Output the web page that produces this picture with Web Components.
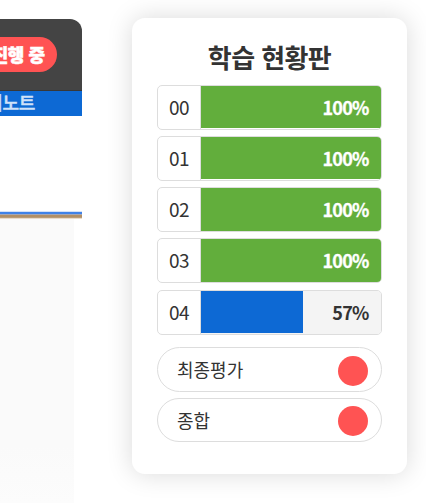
<!DOCTYPE html>
<html lang="ko">
<head>
<meta charset="utf-8">
<title>학습 현황판</title>
<style>
  body {
    margin: 0;
    width: 426px;
    height: 503px;
    overflow: hidden;
    display: flex;
    background: #fff;
    color: #333;
    font-family: "Noto Sans CJK KR", sans-serif;
  }
</style>
</head>
<body>
<lesson-panel status="진행 중" tab="의노트"></lesson-panel>
<status-board heading="학습 현황판">
  <progress-row label="00" value="100"></progress-row>
  <progress-row label="01" value="100"></progress-row>
  <progress-row label="02" value="100" class="tall"></progress-row>
  <progress-row label="03" value="100" class="tall"></progress-row>
  <progress-row label="04" value="57" class="current"></progress-row>
  <result-row slot="results">최종평가</result-row>
  <result-row slot="results" class="last">종합</result-row>
</status-board>

<script>
class LessonPanel extends HTMLElement {
  constructor() {
    super();
    this.attachShadow({ mode: 'open' });
    this.shadowRoot.innerHTML = `
      <style>
        :host {
          display: flex;
          flex-direction: column;
          flex: none;
          width: 82px;
          margin-top: 19px;
          overflow: hidden;
        }
        .header {
          display: flex;
          justify-content: flex-end;
          height: 72px;
          padding: 18px 25px 0 0;
          box-sizing: border-box;
          background: #444;
          border-bottom: 1px solid #383838;
          border-radius: 0 12px 0 0;
        }
        .status {
          flex: none;
          height: 35px;
          line-height: 34px;
          padding: 0 12.5px;
          border-radius: 18px;
          background: #ff5353;
          color: #fff;
          font-size: 18px;
          font-weight: 900;
          letter-spacing: -0.5px;
          -webkit-text-stroke: 0.5px #fff;
          white-space: nowrap;
        }
        .tab {
          display: flex;
          justify-content: flex-end;
          height: 25px;
          line-height: 23px;
          padding-right: 47px;
          background: #0d69d4;
          color: #cfe2f9;
          font-size: 18px;
          font-weight: 500;
          letter-spacing: -0.3px;
          -webkit-text-stroke: 0.5px #cfe2f9;
          white-space: nowrap;
        }
        .rule {
          height: 8px;
          margin-top: 95px;
          background: linear-gradient(#d5e2f7 0 1px, #3f82e8 1px 3px, #a5a7b5 3px 4px, #b18f66 4px 6px, #b99c78 6px 7px, #eadccb 7px);
        }
        .paper {
          width: 74px;
          flex: 1;
          background: linear-gradient(#fafafa 80%, #fcfcfc);
        }
      </style>
      <div class="header"><span class="status"></span></div>
      <div class="tab"><span></span></div>
      <div class="rule"></div>
      <div class="paper"></div>
    `;
  }
  connectedCallback() {
    this.shadowRoot.querySelector('.status').textContent = this.getAttribute('status');
    this.shadowRoot.querySelector('.tab span').textContent = this.getAttribute('tab');
  }
}
customElements.define('lesson-panel', LessonPanel);

class StatusBoard extends HTMLElement {
  constructor() {
    super();
    this.attachShadow({ mode: 'open' });
    this.shadowRoot.innerHTML = `
      <style>
        :host {
          display: block;
          flex: none;
          box-sizing: border-box;
          width: 275px;
          height: 456px;
          margin: 18px 0 0 50px;
          padding: 20px 25px 0;
          background: #fff;
          border-radius: 13px;
          box-shadow: 0 0 26px rgba(0,0,0,0.15);
        }
        h2 {
          margin: 0;
          height: 47px;
          line-height: 38px;
          text-align: center;
          font-size: 26px;
          font-weight: bold;
          letter-spacing: -0.6px;
        }
        .rows {
          display: flex;
          flex-direction: column;
          gap: 6px;
        }
        .results {
          display: flex;
          flex-direction: column;
          gap: 6px;
          margin-top: 12px;
        }
      </style>
      <h2></h2>
      <div class="rows"><slot></slot></div>
      <div class="results"><slot name="results"></slot></div>
    `;
  }
  connectedCallback() {
    this.shadowRoot.querySelector('h2').textContent = this.getAttribute('heading');
  }
}
customElements.define('status-board', StatusBoard);

class ProgressRow extends HTMLElement {
  constructor() {
    super();
    this.attachShadow({ mode: 'open' });
    this.shadowRoot.innerHTML = `
      <style>
        :host {
          display: flex;
          box-sizing: border-box;
          height: 45px;
          border: 1px solid #ddd;
          border-radius: 5px;
          overflow: hidden;
          font-size: 19px;
          letter-spacing: -0.5px;
          line-height: 43px;
          --bar: 42px;
        }
        :host(.tall) {
          --bar: 43px;
        }
        :host(.current) {
          margin-top: 1px;
        }
        .label {
          width: 42px;
          line-height: 41px;
          border-right: 1px solid #ddd;
          text-align: center;
        }
        .track {
          flex: 1;
          height: var(--bar);
          padding-right: 12.5px;
          text-align: right;
          font-size: 18px;
          font-weight: bold;
          letter-spacing: -0.8px;
          background: linear-gradient(var(--fill), var(--fill)) no-repeat #f4f4f4;
          background-size: var(--done) 42px;
        }
        .track.done {
          color: #fff;
          background: var(--fill);
          -webkit-text-stroke: 0.3px #fff;
        }
        :host(.current) .track {
          height: 43px;
        }
      </style>
      <div class="label"></div>
      <div class="track"></div>
    `;
  }
  connectedCallback() {
    const value = Number(this.getAttribute('value'));
    const track = this.shadowRoot.querySelector('.track');
    this.shadowRoot.querySelector('.label').textContent = this.getAttribute('label');
    track.textContent = value + '%';
    // track is 180px wide, keep the bar on whole pixels
    track.style.setProperty('--done', Math.floor(180 * value / 100) + 'px');
    track.style.setProperty('--fill', value === 100 ? '#62ae3c' : '#0d69d4');
    track.classList.toggle('done', value === 100);
  }
}
customElements.define('progress-row', ProgressRow);

class ResultRow extends HTMLElement {
  constructor() {
    super();
    this.attachShadow({ mode: 'open' });
    this.shadowRoot.innerHTML = `
      <style>
        :host {
          display: flex;
          justify-content: space-between;
          box-sizing: border-box;
          height: 45px;
          padding: 0 13px 0 19px;
          border: 1px solid #ddd;
          border-radius: 23px;
          font-size: 18px;
          line-height: 43px;
        }
        :host(.last) {
          height: 44px;
        }
        .dot {
          width: 30px;
          height: 30px;
          margin-top: 8px;
          border-radius: 50%;
          background: #ff5353;
        }
        :host(.last) .dot {
          margin-top: 7px;
        }
      </style>
      <span><slot></slot></span>
      <div class="dot"></div>
    `;
  }
}
customElements.define('result-row', ResultRow);
</script>
</body>
</html>
